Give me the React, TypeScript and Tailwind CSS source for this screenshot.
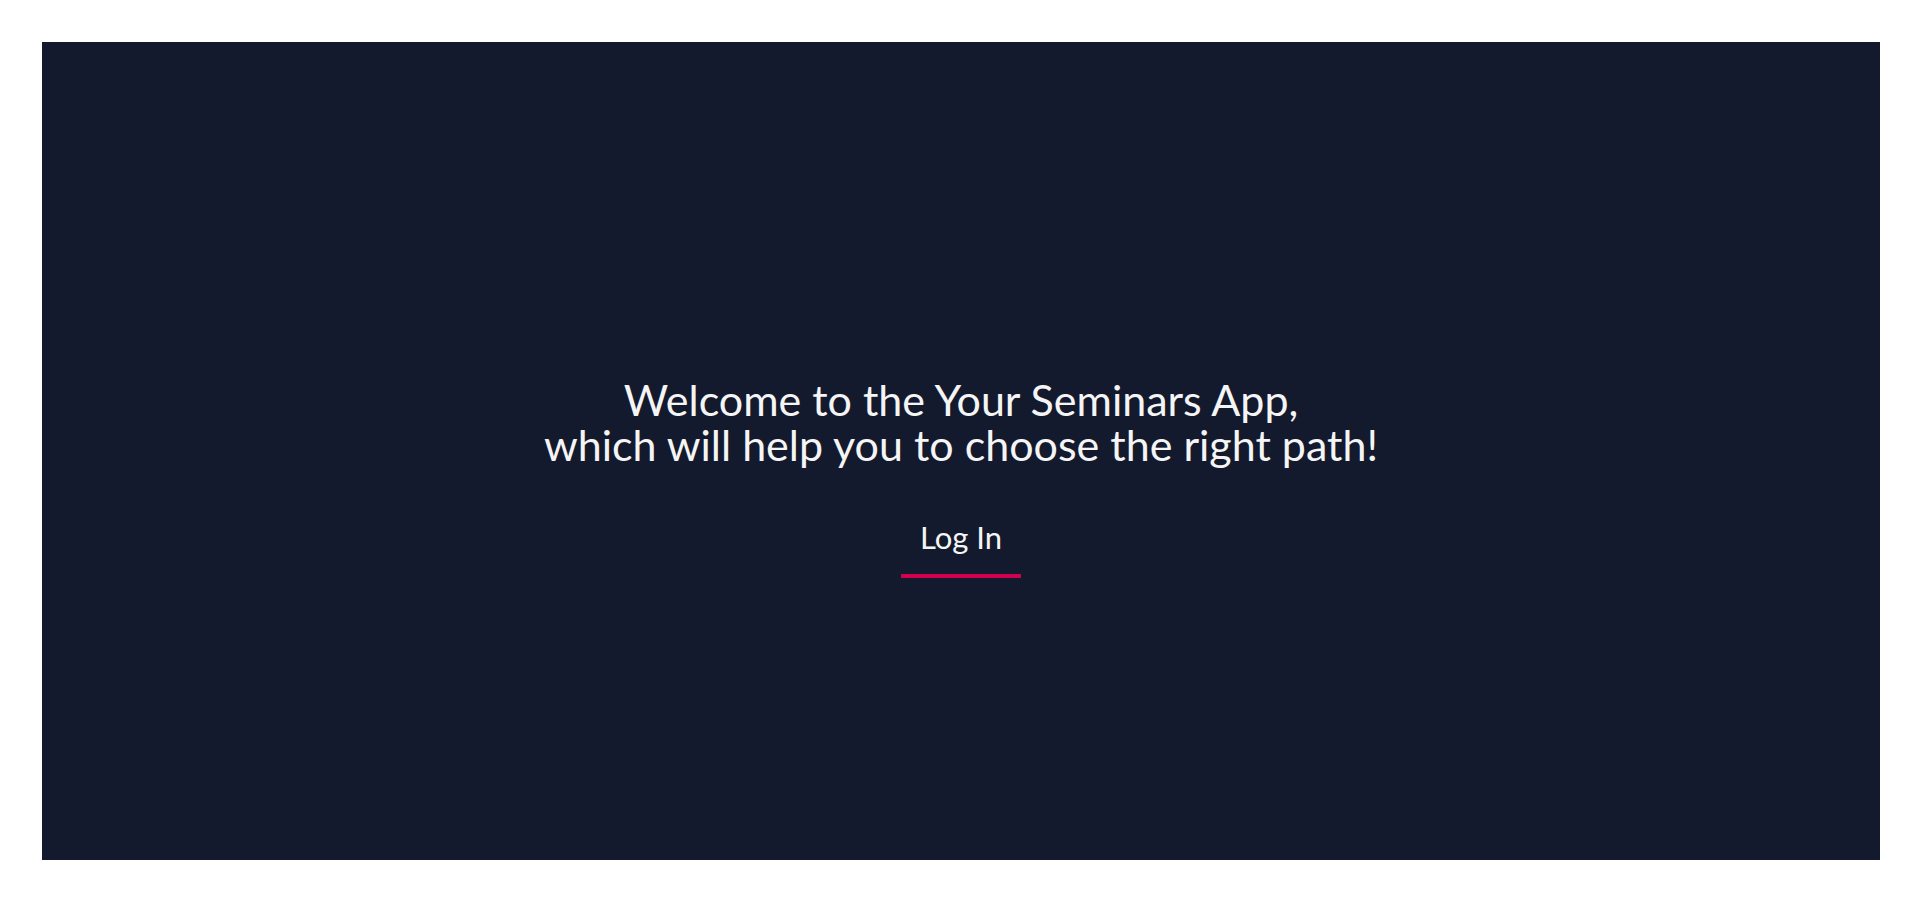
export default function App() {
  return (
    <div className="w-full h-[902px] bg-white pt-[42px] pb-[42px] pl-[42px] pr-[40px]" style={{ fontFamily: 'Lato, "Open Sans", sans-serif' }}>
      <div className="h-full w-full bg-[#141a2e] flex flex-col items-center justify-center pt-[52px]">
        <h1 className="text-center text-[43px] leading-[45px] text-[#f5f5f5] font-normal">
          Welcome to the Your Seminars App,
          <br />
          which will help you to choose the right path!
        </h1>
        <button className="mt-[52px] w-[120px] pb-[19px] border-b-4 border-[#d0004f] text-[31px] leading-[36px] text-[#f5f5f5]">
          Log In
        </button>
      </div>
    </div>
  );
}
